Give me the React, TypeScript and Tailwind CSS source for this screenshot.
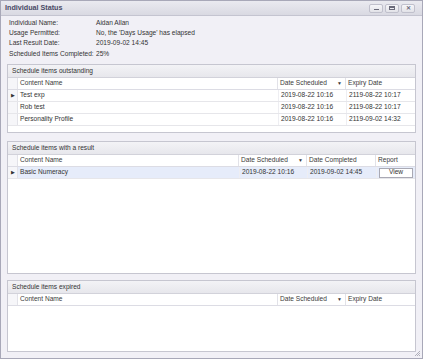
import React from 'react'

const font = { fontFamily: '"Liberation Sans", Arial, sans-serif' }

type Col = { label: string; w: string; sort?: boolean }

function HeaderRow({ cols }: { cols: Col[] }) {
  return (
    <div className="flex h-[12px] bg-white border-b border-[#dcdce4] text-[#3a3a3a]">
      <div className="w-[10px] shrink-0 border-r border-[#e2e2e8] bg-[#f6f6f9]" />
      {cols.map((c, i) => (
        <div
          key={i}
          className={`${c.w} flex items-center justify-between px-[2px] border-r border-[#e2e2e8] last:border-r-0`}
        >
          <span>{c.label}</span>
          {c.sort && <span className="text-[5px] mr-[1px]">▼</span>}
        </div>
      ))}
    </div>
  )
}

function Row({ cells, widths, current, selected, view }: { cells: string[]; widths: string[]; current?: boolean; selected?: boolean; view?: boolean }) {
  return (
    <div className={`flex h-[12px] border-b border-[#e6e6ea] text-[#333] ${selected ? 'bg-[#e6ecfa]' : 'bg-white'}`}>
      <div className="w-[10px] shrink-0 flex items-center justify-center border-r border-[#e2e2e8] bg-[#f6f6f9]">
        {current && <span className="text-[5px] leading-none">▶</span>}
      </div>
      {cells.map((c, i) => (
        <div key={i} className={`${widths[i]} flex items-center px-[2px] ${i === 0 ? '' : 'border-l border-[#eeeef2]'}`}>
          {c}
        </div>
      ))}
      {view && (
        <div className="flex-1 flex items-center px-[2px] border-l border-[#eeeef2]">
          <div className="w-full h-[10px] bg-white border border-[#a9a9b4] flex items-center justify-center">View</div>
        </div>
      )}
    </div>
  )
}

function Panel({ title, className, children }: { title: string; className: string; children: React.ReactNode }) {
  return (
    <div className={`${className} flex flex-col border border-[#c6c6d0] bg-white`}>
      <div className="h-[13px] shrink-0 flex items-center px-[4px] bg-gradient-to-b from-[#f3f3f6] to-[#e7e7ec] border-b border-[#d2d2da] text-[#333]">
        {title}
      </div>
      <div className="flex-1 flex flex-col">{children}</div>
    </div>
  )
}

export default function App() {
  const outCols: Col[] = [
    { label: 'Content Name', w: 'w-[260px]' },
    { label: 'Date Scheduled', w: 'w-[68px]', sort: true },
    { label: 'Expiry Date', w: 'flex-1' },
  ]
  const outW = ['w-[260px]', 'w-[68px]', 'flex-1']
  const resCols: Col[] = [
    { label: 'Content Name', w: 'w-[221px]' },
    { label: 'Date Scheduled', w: 'w-[68px]', sort: true },
    { label: 'Date Completed', w: 'w-[69px]' },
    { label: 'Report', w: 'flex-1' },
  ]

  return (
    <div style={font} className="relative w-[423px] h-[359px] text-[6.6px] leading-none whitespace-nowrap border border-[#a8a8b8] bg-[#f1f0f6] flex flex-col overflow-hidden">
      <div className="h-[15px] shrink-0 flex items-center justify-between pl-[4px] pr-[7px] bg-gradient-to-b from-[#eaeaf0] to-[#d9d9e2] border-b border-[#c4c4d0]">
        <span className="font-bold text-[7.2px] text-[#4a4a66]">Individual Status</span>
        <div className="flex gap-[2px]">
          {['min', 'max', 'close'].map(k => (
            <div key={k} className="w-[14px] h-[9px] rounded-[2px] border border-[#c0c0cc] bg-gradient-to-b from-[#f6f6f9] to-[#e2e2e8] flex items-center justify-center">
              {k === 'min' && <div className="w-[5px] h-[1.5px] bg-[#6a6a7a] mt-[3px]" />}
              {k === 'max' && <div className="w-[6px] h-[4px] border border-[#6a6a7a] border-t-2" />}
              {k === 'close' && <span className="text-[6px] font-bold text-[#6a6a7a]">✕</span>}
            </div>
          ))}
        </div>
      </div>

      <div className="flex-1 flex flex-col px-[6px] pt-[2px] pb-[6px]">
        <div className="grid grid-cols-[87px_1fr] auto-rows-[10.3px] items-center pl-[2px] text-[#333] mb-[5px]">
          <span>Individual Name:</span><span>Aidan Allan</span>
          <span>Usage Permitted:</span><span>No, the 'Days Usage' has elapsed</span>
          <span>Last Result Date:</span><span>2019-09-02 14:45</span>
          <span>Scheduled Items Completed:</span><span>25%</span>
        </div>

        <Panel title="Schedule items outstanding" className="h-[69px] mb-[8px]">
          <HeaderRow cols={outCols} />
          <Row current widths={outW} cells={['Test exp', '2019-08-22 10:16', '2119-08-22 10:17']} />
          <Row widths={outW} cells={['Rob test', '2019-08-22 10:16', '2119-08-22 10:17']} />
          <Row widths={outW} cells={['Personality Profile', '2019-08-22 10:16', '2119-09-02 14:32']} />
        </Panel>

        <Panel title="Schedule items with a result" className="h-[133px] mb-[6px]">
          <HeaderRow cols={resCols} />
          <Row current selected view widths={['w-[221px]', 'w-[68px]', 'w-[69px]']} cells={['Basic Numeracy', '2019-08-22 10:16', '2019-09-02 14:45']} />
        </Panel>

        <Panel title="Schedule items expired" className="flex-1">
          <HeaderRow cols={outCols} />
        </Panel>
      </div>

      <svg className="absolute right-[1px] bottom-[1px]" width="7" height="7" viewBox="0 0 7 7">
        <path d="M6 1 L1 6 M6 3 L3 6 M6 5 L5 6" stroke="#a0a0ac" strokeWidth="0.8" />
      </svg>
    </div>
  )
}
